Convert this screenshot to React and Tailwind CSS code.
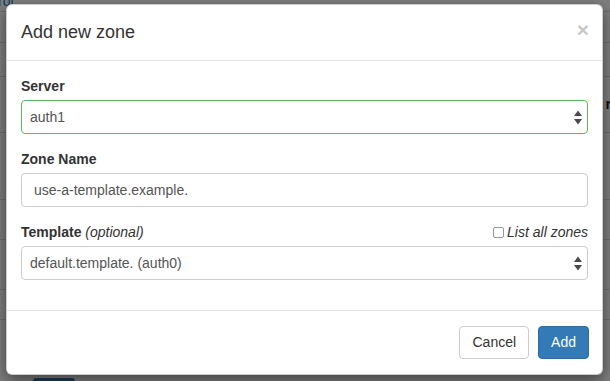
import React from 'react';

const font = { fontFamily: '"Liberation Sans", Arial, sans-serif' };

// little up/down arrows drawn by mac-style select boxes
const SelectArrows = () => (
  <svg width="8" height="15" viewBox="0 0 8 15" className="shrink-0">
    <polygon points="0,6 4,0.5 8,6" fill="#4a4a4a" />
    <polygon points="0,9 8,9 4,14.5" fill="#4a4a4a" />
  </svg>
);

const Select = ({ value, focused }) => (
  <div
    className={`flex h-[34px] items-center justify-between rounded-[4px] border bg-white pl-[8px] pr-[5px] text-[14px] text-[#555] ${
      focused ? 'border-[#5cb85c]' : 'border-[#ccc]'
    }`}
  >
    <span>{value}</span>
    <SelectArrows />
  </div>
);

const Label = ({ children }) => (
  <div className="mb-[4px] text-[14px] font-bold leading-[20px] text-[#333]">{children}</div>
);

const BackgroundPage = () => (
  <div className="flex h-[381px] w-[610px] flex-col bg-white">
    <div className="h-[12px] overflow-hidden border-b border-[#ddd]">
      <div className="-mt-[9px] ml-[-2px] text-[14px] text-[#337ab7]">rol</div>
    </div>
    <div className="h-[31px] border-b border-[#ddd]" />
    <div className="h-[34px] border-b border-[#ddd]" />
    <div className="flex h-[56px] items-center justify-end border-b border-[#ddd]">
      <span className="mr-[-1px] text-[14px] font-bold text-[#222]">r</span>
    </div>
    <div className="h-[67px] border-b border-[#ddd]" />
    <div className="h-[40px] border-b border-[#ddd]" />
    <div className="h-[50px] border-b border-[#ddd]" />
    <div className="h-[30px] border-b border-[#ddd]" />
    <div className="flex flex-1 items-end pl-[33px]">
      <div className="h-[3px] w-[42px] rounded-t-[3px] bg-[#337ab7]" />
    </div>
  </div>
);

export default function App() {
  return (
    <div className="relative h-[381px] w-[610px] overflow-hidden" style={font}>
      <BackgroundPage />
      <div className="absolute inset-0 bg-black/50" />

      {/* modal */}
      <div className="absolute left-[6px] top-[4px] w-[597px] rounded-[6px] border border-black/20 bg-white shadow-[0_5px_15px_rgba(0,0,0,0.5)]">
        <div className="flex items-start justify-between border-b border-[#e5e5e5] px-[14px] py-[15px]">
          <h4 className="text-[18px] font-medium leading-[25px] text-[#333]">Add new zone</h4>
          <button className="mr-[-1px] mt-[-1px] text-[21px] font-bold leading-[21px] text-[#c8c8c8]">×</button>
        </div>

        <div className="flex flex-col gap-[15px] px-[14px] pb-[30px] pt-[15px]">
          <div>
            <Label>Server</Label>
            <Select value="auth1" focused />
          </div>
          <div>
            <Label>Zone Name</Label>
            <div className="flex h-[34px] items-center rounded-[4px] border border-[#ccc] bg-white px-[12px] text-[14px] text-[#555]">
              use-a-template.example.
            </div>
          </div>
          <div>
            <div className="flex items-start justify-between">
              <Label>
                Template <span className="font-normal italic">(optional)</span>
              </Label>
              <label className="flex items-center gap-[3px] text-[14px] italic leading-[20px] text-[#333]">
                <span className="h-[11px] w-[11px] rounded-[2px] border border-[#999] bg-white" />
                List all zones
              </label>
            </div>
            <Select value="default.template. (auth0)" />
          </div>
        </div>

        <div className="flex justify-end gap-[9px] border-t border-[#e5e5e5] px-[14px] py-[15px]">
          <button className="h-[33px] rounded-[4px] border border-[#ccc] bg-white px-[12px] text-[14px] text-[#333]">
            Cancel
          </button>
          <button className="mr-[-1px] h-[33px] rounded-[4px] border border-[#2e6da4] bg-[#337ab7] px-[12px] text-[14px] text-white">
            Add
          </button>
        </div>
      </div>
    </div>
  );
}
